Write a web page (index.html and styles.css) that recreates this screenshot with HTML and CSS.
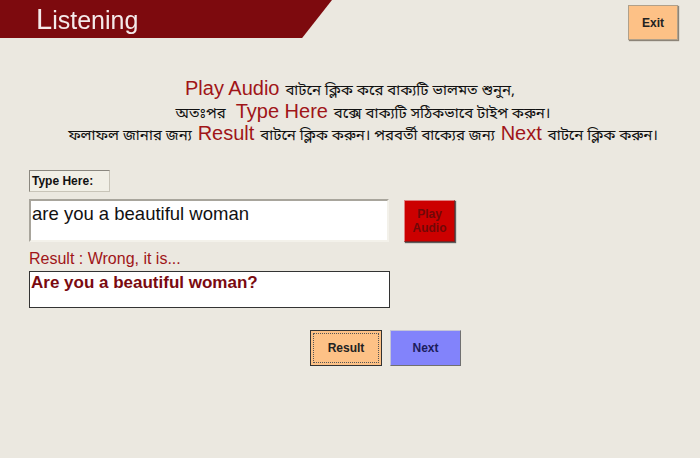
FILE: index.html
```html
<!DOCTYPE html>
<html>
<head>
<meta charset="utf-8">
<link rel="stylesheet" href="styles.css">
</head>
<body>
<div class="page">
  <div class="top">
    <div class="banner"><span class="title">Listening</span></div>
    <button class="btn exit">Exit</button>
  </div>
  <div class="instructions">
    <p class="first"><span class="kw">Play Audio</span> বাটনে ক্লিক করে বাক্যটি ভালমত শুনুন,</p>
    <p><span class="kw-pre">অতঃপর</span> <span class="kw">Type Here</span> বক্সে বাক্যটি সঠিকভাবে টাইপ করুন।</p>
    <p>ফলাফল জানার জন্য <span class="kw">Result</span> বাটনে ক্লিক করুন। পরবর্তী বাক্যের জন্য <span class="kw">Next</span> বাটনে ক্লিক করুন।</p>
  </div>
  <div class="form">
    <div class="label">Type Here:</div>
    <div class="row">
      <div class="input">are you a beautiful woman</div>
      <button class="btn play">Play<br>Audio</button>
    </div>
    <div class="result">Result : Wrong, it is...</div>
    <div class="answer">Are you a beautiful woman?</div>
    <div class="actions">
      <button class="btn result-btn"><span>Result</span></button>
      <button class="btn next">Next</button>
    </div>
  </div>
</div>
</body>
</html>
```
FILE: styles.css
```css
html, body {
  margin: 0;
  padding: 0;
}
body {
  width: 700px;
  height: 458px;
  overflow: hidden;
  background: #ebe8e0;
  font-family: "Liberation Sans", Arial, sans-serif;
}
.page {
  display: flex;
  flex-direction: column;
}
.top {
  display: flex;
  justify-content: space-between;
  align-items: flex-start;
  height: 60px;
}
.banner {
  width: 332px;
  height: 38px;
  background: #7d0a0e;
  clip-path: polygon(0 0, 100% 0, 91% 100%, 0 100%);
  filter: drop-shadow(0 3px 2px rgba(0,0,0,0.5));
  display: flex;
  align-items: center;
}
.title {
  color: #f4eaea;
  font-size: 25px;
  margin-left: 36px;
  margin-top: 1px;
}
.title::first-letter {
  font-size: 29px;
}
.btn {
  font-family: "Liberation Sans", Arial, sans-serif;
  font-weight: bold;
  font-size: 12px;
  padding: 0;
  cursor: pointer;
}
.exit {
  margin: 5px 22px 0 0;
  width: 50px;
  height: 35px;
  background: #fdc186;
  border: 1px solid #b0a08a;
  box-shadow: 1px 1px 1px #8c8478;
  color: #222;
}
.instructions {
  text-align: center;
  margin-left: 26px;
  margin-top: 17px;
}
.instructions p {
  margin: 0;
  height: 22.5px;
  font-size: 15px;
  line-height: 22px;
  color: #111;
  font-family: "Noto Sans Bengali", "Noto Sans", "Liberation Sans", sans-serif;
  white-space: nowrap;
}
.instructions p.first {
  padding-right: 28px;
}
.kw-pre {
  margin-right: 4px;
}
.kw {
  color: #a01518;
  font-family: "Liberation Sans", Arial, sans-serif;
  font-size: 20px;
  margin: 0 2px;
}
.form {
  margin: 25px 0 0 29px;
  display: flex;
  flex-direction: column;
  align-items: flex-start;
}
.label {
  width: 77px;
  height: 20px;
  background: #f1efe6;
  border: 1px solid #c8c4b8;
  border-left-color: #8a877f;
  border-top-color: #8a877f;
  font-size: 12px;
  font-weight: bold;
  line-height: 20px;
  padding-left: 2px;
  box-sizing: content-box;
  color: #111;
}
.row {
  display: flex;
  gap: 15px;
  margin-top: 7px;
}
.input {
  width: 360px;
  height: 43px;
  background: #fff;
  border: 2px solid #a8a59c;
  border-right-color: #f3f1ea;
  border-bottom-color: #f3f1ea;
  font-size: 18.5px;
  color: #111;
  padding: 2px 0 0 1px;
  box-sizing: border-box;
}
.play {
  width: 51px;
  height: 42px;
  margin-top: 1px;
  background: #cc0000;
  border: 1px solid #7a2222;
  border-left-color: #e08080;
  border-top-color: #e08080;
  box-shadow: 1px 1px 1px #5c5c5c;
  color: #700808;
  font-size: 12px;
  line-height: 14px;
}
.result {
  margin-top: 8px;
  color: #a01518;
  font-size: 16px;
  line-height: 18px;
}
.answer {
  margin-top: 3px;
  width: 361px;
  height: 37px;
  background: #fff;
  border: 1px solid #333;
  box-sizing: border-box;
  color: #7a0a10;
  font-weight: bold;
  font-size: 17px;
  padding: 1px 0 0 1px;
}
.actions {
  display: flex;
  gap: 8px;
  margin: 22px 0 0 281px;
}
.result-btn {
  width: 72px;
  height: 36px;
  background: #fdc186;
  border: 1px solid #333;
  padding: 2px;
  color: #222;
}
.result-btn span {
  display: flex;
  align-items: center;
  justify-content: center;
  width: 100%;
  height: 100%;
  border: 1px dotted #555;
  box-sizing: border-box;
}
.next {
  width: 71px;
  height: 36px;
  background: #8283fb;
  border: 1px solid #c4c4d8;
  border-right-color: #707070;
  border-bottom-color: #707070;
  color: #1c1c5c;
}
```
